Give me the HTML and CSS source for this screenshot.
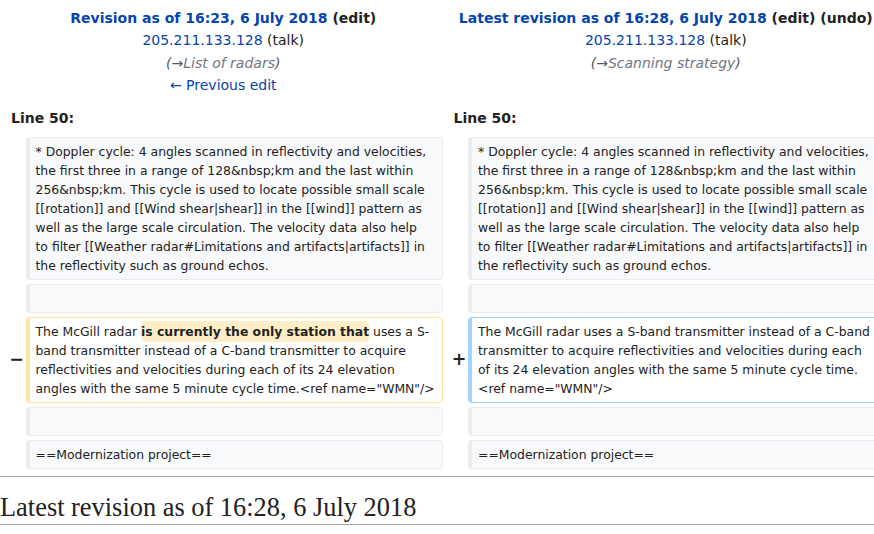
FILE: index.html
```html
<!DOCTYPE html>
<html lang="en">
<head>
<meta charset="utf-8">
<title>Difference between revisions</title>
<link rel="stylesheet" href="styles.css">
</head>
<body>
<div class="page">
<table class="diff">
<colgroup><col class="col-marker"><col class="col-content"><col class="col-marker"><col class="col-content"></colgroup>
<tr class="title-row">
<td colspan="2" class="title">
<div class="title-main"><a href="#">Revision as of 16:23, 6 July 2018</a> (edit)</div>
<div><a href="#">205.211.133.128</a> (talk)</div>
<div class="comment">(<span class="arrow">→</span><span class="autocomment">List of radars</span>)</div>
<div><a href="#">← Previous edit</a></div>
</td>
<td colspan="2" class="title">
<div class="title-main"><a href="#">Latest revision as of 16:28, 6 July 2018</a> (edit) (undo)</div>
<div><a href="#">205.211.133.128</a> (talk)</div>
<div class="comment">(<span class="arrow">→</span><span class="autocomment">Scanning strategy</span>)</div>
</td>
</tr>
<tr>
<td colspan="2" class="lineno">Line 50:</td>
<td colspan="2" class="lineno">Line 50:</td>
</tr>
<tr>
<td class="marker"></td>
<td class="cell context">* Doppler cycle: 4 angles scanned in reflectivity and velocities,<br>the first three in a range of 128&amp;nbsp;km and the last within<br>256&amp;nbsp;km. This cycle is used to locate possible small scale<br>[[rotation]] and [[Wind shear|shear]] in the [[wind]] pattern as<br>well as the large scale circulation. The velocity data also help<br>to filter [[Weather radar#Limitations and artifacts|artifacts]] in<br>the reflectivity such as ground echos.</td>
<td class="marker"></td>
<td class="cell context">* Doppler cycle: 4 angles scanned in reflectivity and velocities,<br>the first three in a range of 128&amp;nbsp;km and the last within<br>256&amp;nbsp;km. This cycle is used to locate possible small scale<br>[[rotation]] and [[Wind shear|shear]] in the [[wind]] pattern as<br>well as the large scale circulation. The velocity data also help<br>to filter [[Weather radar#Limitations and artifacts|artifacts]] in<br>the reflectivity such as ground echos.</td>
</tr>
<tr>
<td class="marker"></td>
<td class="cell context"><br></td>
<td class="marker"></td>
<td class="cell context"><br></td>
</tr>
<tr>
<td class="marker">−</td>
<td class="cell deleted">The McGill radar <span class="del-inline">is currently the only station that</span> uses a S-<br>band transmitter instead of a C-band transmitter to acquire<br>reflectivities and velocities during each of its 24 elevation<br>angles with the same 5 minute cycle time.&lt;ref name="WMN"/&gt;</td>
<td class="marker">+</td>
<td class="cell added">The McGill radar uses a S-band transmitter instead of a C-band<br>transmitter to acquire reflectivities and velocities during each<br>of its 24 elevation angles with the same 5 minute cycle time.<br>&lt;ref name="WMN"/&gt;</td>
</tr>
<tr>
<td class="marker"></td>
<td class="cell context"><br></td>
<td class="marker"></td>
<td class="cell context"><br></td>
</tr>
<tr>
<td class="marker"></td>
<td class="cell context">==Modernization project==</td>
<td class="marker"></td>
<td class="cell context">==Modernization project==</td>
</tr>
</table>
<hr class="diff-hr">
<h2 class="current-title">Latest revision as of 16:28, 6 July 2018</h2>
</div>
</body>
</html>
```
FILE: styles.css
```css
html, body {
  margin: 0;
  padding: 0;
  overflow: hidden;
  background: #fff;
}
body {
  font-family: "DejaVu Sans", sans-serif;
  font-size: 14px;
  color: #222;
}
.page {
  width: 889px;
}
a {
  color: #0645ad;
  text-decoration: none;
}
.diff {
  width: 889px;
  table-layout: fixed;
  border-collapse: separate;
  border-spacing: 4px;
  line-height: 1.6;
}
.col-marker {
  width: 17.5px;
}
.col-content {
  width: 417px;
}
.title {
  text-align: center;
  vertical-align: top;
  padding: 3px 1px 1px;
}
.title-main {
  font-weight: bold;
}
.comment {
  font-style: italic;
  color: #54595d;
}
.autocomment {
  color: #72777d;
}
.lineno {
  font-weight: bold;
  padding: 5px 7px 4px;
}
.marker {
  text-align: right;
  font-weight: bold;
  font-size: 17.5px;
  line-height: 1.2;
  letter-spacing: -2.5px;
  padding: 0;
}
.cell {
  font-size: 12.4px;
  line-height: 19px;
  padding: 4px 4px 4px 6px;
  border-style: solid;
  border-width: 1px 1px 1px 4px;
  border-radius: 4px;
  vertical-align: top;
  white-space: nowrap;
  overflow: hidden;
}
.context {
  background: #f8f9fa;
  border-color: #eaecf0;
}
.deleted {
  border-color: #ffe49c;
}
.added {
  border-color: #a3d3ff;
}
.del-inline {
  background: #feeec8;
  font-weight: bold;
  border-radius: 4px;
  padding: 3px 0;
}
.diff-hr {
  height: 0;
  border: 0;
  border-top: 1px solid #a2a9b1;
  margin: 3px 0 0;
}
.current-title {
  font-family: "Liberation Serif", serif;
  font-weight: normal;
  font-size: 26.4px;
  line-height: 1.3;
  margin: 13px 0 0;
  border-bottom: 1px solid #a2a9b1;
}
```
